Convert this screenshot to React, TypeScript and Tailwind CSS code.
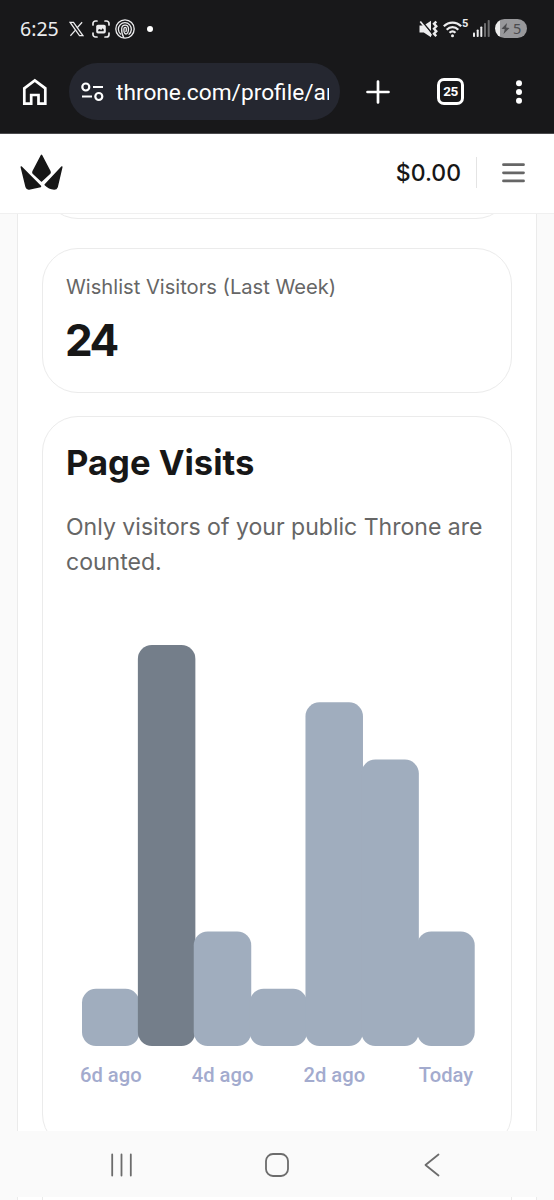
import type { ReactNode } from 'react';

interface Visit { label: string; count: number; active?: boolean; }

const visits: Visit[] = [
  { label: '6d ago', count: 1 },
  { label: '', count: 7, active: true },
  { label: '4d ago', count: 2 },
  { label: '', count: 1 },
  { label: '2d ago', count: 6 },
  { label: '', count: 5 },
  { label: 'Today', count: 2 },
];

const UNIT = 57.3;
const STEP = 55.87;
const BAR = 57.5;

function StatusBar() {
  return (
    <div className="flex h-[56px] items-center justify-between pl-5 pr-[27px] pt-px text-[#ececee]">
      <div className="flex items-center">
        <span className="w-[49px] font-['Noto_Sans'] text-[19.500px] leading-none">6:25</span>
        {/* X */}
        <svg width="15" height="16" viewBox="0 0 16 16" fill="none" stroke="currentColor" strokeWidth="1.3">
          <path d="M1.2 1h3.6l10 14h-3.600z" />
          <path d="M14 .8 8.700 6.700M6.900 9.100 1.500 15.200" />
        </svg>
        {/* Screen capture */}
        <svg className="ml-2" width="18" height="18" viewBox="0 0 18 18" fill="none" stroke="currentColor" strokeWidth="1.7" strokeLinecap="round">
          <path d="M1 5V3.500A2.500 2.500 0 0 1 3.500 1H5M13 1h1.500A2.500 2.500 0 0 1 17 3.500V5M17 13v1.500a2.500 2.500 0 0 1-2.500 2.500H13M5 17H3.500A2.500 2.500 0 0 1 1 14.500V13" />
          <rect x="4.200" y="4.700" width="9.600" height="8.800" rx="1.800" fill="currentColor" stroke="none" />
          <path d="M6.200 11.200v-1.400l1.500-.8 1.500 1 1.500-1.800 1 1.300v1.700z" fill="#18181a" stroke="none" />
        </svg>
        {/* Fingerprint swirl */}
        <svg className="ml-[5px]" width="20" height="20" viewBox="0 0 20 20" fill="none" stroke="currentColor" strokeWidth="1.3" strokeLinecap="round">
          <circle cx="10" cy="10" r="9.200" />
          <path d="M5.500 15A6.500 6.500 0 1 1 14 15.200" />
          <path d="M8.800 18.500C6.800 15.500 6.500 12.500 6.700 9.500c.4-4.500 6.600-4.500 6.800.3.100 3.700-1.300 5.200-2.600 5.200-1.900 0-2.200-3-1.900-5.600.2-1.500 2.200-1.500 2.300.1.100 1.500 0 2.500-.4 3" />
        </svg>
        <span className="ml-[12px] h-[6px] w-[6px] rounded-full bg-white" />
      </div>
      <div className="flex items-center">
        {/* Vibrate */}
        <svg width="19" height="18" viewBox="0 0 19 18" fill="none">
          <path d="M.5 5.500h4.300L12 .8v16.400l-7.200-4.700H.5z" fill="currentColor" />
          <path d="M2.300 .5 14 14.500" stroke="#18181a" strokeWidth="1.500" />
          <path d="M1.300 1.500 12.500 15.500" stroke="currentColor" strokeWidth="1.700" />
          <path d="m17.300 1.500-2.300 2.300 2.300 2.500-2.300 2.500 2.300 2.500-2.300 2.500 2.300 2.300" stroke="currentColor" strokeWidth="2.400" />
        </svg>
        {/* Wifi */}
        <svg className="ml-[5px]" width="19" height="18" viewBox="0 0 19 18" fill="none" stroke="currentColor" strokeWidth="2.200">
          <path d="M.8 6.300c5-5 12.400-5 17.400 0M3.700 9.700c3.400-3.400 8.200-3.400 11.600 0M6.500 12.800c1.800-1.700 4.200-1.700 6 0" />
          <circle cx="9.500" cy="15.700" r="1.500" fill="currentColor" stroke="none" />
        </svg>
        <span className="-mt-2.5 w-[8px] font-['Roboto'] text-[11px] font-bold leading-none">5</span>
        <svg className="ml-[3px]" width="17" height="17" viewBox="0 0 17 17" fill="currentColor">
          <rect x="0" y="12.500" width="2" height="4.500" rx=".8" />
          <rect x="3.700" y="9.500" width="2" height="7.500" rx=".8" />
          <rect x="7.300" y="6.500" width="2" height="10.500" rx=".8" />
          <rect x="11" y="3" width="2" height="14" rx=".8" opacity=".4" />
          <rect x="14.700" y="0" width="2" height="17" rx=".8" opacity=".4" />
        </svg>
        {/* Battery */}
        <div className="ml-[5px] flex h-[19px] w-[32px] items-center overflow-hidden rounded-full bg-[linear-gradient(90deg,#ededed_16%,#98989b_16%)] pl-[6px] text-[#4b4b4e]">
          <svg width="9" height="11" viewBox="0 0 9 11" fill="currentColor">
            <path d="M6 0 .5 5.800l3.300.5L2.500 11 8.500 5l-3.400-.5z" />
          </svg>
          <span className="ml-[3px] font-['Noto_Sans'] text-[14.500px] leading-none">5</span>
        </div>
      </div>
    </div>
  );
}

function BrowserBar() {
  return (
    <div className="flex h-[78px] items-start border-b border-[#4a4a4d] pt-[7px]">
      <div className="flex h-[57px] w-full items-center text-white">
        <svg className="ml-[22px]" width="26" height="28" viewBox="0 0 26 28" fill="none" stroke="currentColor" strokeWidth="2.700">
          <path d="M2.300 10.300 12.800 2.500l10.500 7.800v15.400H16.500V17H9.200v8.700H2.300z" />
        </svg>
        <div className="ml-[21px] flex h-[57px] w-[271px] items-center rounded-full bg-[#252730] pl-[12px] pr-[11px]">
          <svg className="shrink-0" width="23" height="20" viewBox="0 0 23 20" fill="none" stroke="currentColor" strokeWidth="2.200">
            <circle cx="4.800" cy="5" r="3.500" />
            <path d="M12 5h10M1 14.500h10" />
            <circle cx="17.800" cy="14.500" r="3.500" />
          </svg>
          <span className="ml-[12px] mt-0.5 w-[213px] overflow-hidden whitespace-nowrap font-['Roboto'] text-[22.700px] leading-8">throne.com/profile/am</span>
        </div>
        <svg className="ml-[26px]" width="24" height="24" viewBox="0 0 24 24" fill="none" stroke="currentColor" strokeWidth="2.700" strokeLinecap="round">
          <path d="M12 1.500v21M1.500 12h21" />
        </svg>
        {/* Open tabs */}
        <div className="ml-[47px] flex h-[27px] w-[27px] items-center justify-center rounded-[7px] border-3 border-white font-['Roboto'] text-[13.500px] font-bold leading-none tracking-[-0.6px]">25</div>
        <svg className="ml-[52px]" width="6" height="24" viewBox="0 0 6 24" fill="currentColor">
          <circle cx="3" cy="3.200" r="3" />
          <circle cx="3" cy="12" r="3" />
          <circle cx="3" cy="20.800" r="3" />
        </svg>
      </div>
    </div>
  );
}

function SiteHeader() {
  return (
    <header className="flex h-[80px] items-center border-b border-[#f0f0f0] bg-white pb-0.5 pl-5 text-[#171717]">
      <svg className="-mt-px" width="43" height="36" viewBox="0 0 43 36" fill="currentColor" stroke="currentColor" strokeWidth="1.500" strokeLinejoin="round">
        <path d="M21.500 1.300 30 17.700q.4 1-.4 1.800L21.500 27l-8.100-7.500q-.8-.8-.4-1.800z" />
        <path d="M1.300 13 20.500 32.400 9 34.900q-2.100.2-2.800-1.900z" />
        <path d="M41.800 13 25.200 30.800q3.800 3.900 9 4.200 2.200 0 2.900-2z" />
      </svg>
      <span className="ml-auto mt-0.5 text-[23px] font-medium">$0.00</span>
      <span className="ml-[15px] h-[31px] w-px bg-[#e4e4e4]" />
      <svg className="ml-[25px] mr-[29px]" width="23" height="20" viewBox="0 0 23 20" fill="none" stroke="#666" strokeWidth="2.800" strokeLinecap="round">
        <path d="M1.500 1.700h20M1.500 9.800h20M1.500 17.900h20" />
      </svg>
    </header>
  );
}

function Card({ className, children }: { className: string; children?: ReactNode }) {
  return <div className={`shrink-0 rounded-[36px] border border-[#ebebeb] bg-white px-[23px] ${className}`}>{children}</div>;
}

function VisitsChart() {
  const height = 7 * UNIT;
  return (
    <svg className="mt-[65px] font-['Roboto']" width="422" height="450" viewBox="0 0 422 450">
      {visits.map((v, i) => (
        <g key={i}>
          <rect x={16 + i * STEP} y={height - v.count * UNIT} width={BAR} height={v.count * UNIT} rx="14"
            fill={v.active ? '#747e8a' : '#a0adbe'} />
          <text x={44.800 + i * STEP} y="436.500" textAnchor="middle" fontSize="20.200" fontWeight="500" fill="#a3abce">{v.label}</text>
        </g>
      ))}
    </svg>
  );
}

function NavBar() {
  return (
    <nav className="flex h-[66px] shrink-0 items-center justify-between bg-[#fafafa] pl-[110px] pr-[114px] text-[#6c6c6c]">
      <svg className="mt-0.5" width="23" height="24" viewBox="0 0 23 24" fill="none" stroke="currentColor" strokeWidth="1.800" strokeLinecap="round">
        <path d="M2.200 1.500v21M11.500 1.500v21M20.800 1.500v21" />
      </svg>
      <svg className="mr-[4px] mt-0.5" width="24" height="24" viewBox="0 0 24 24" fill="none" stroke="currentColor" strokeWidth="1.800">
        <rect x="1" y="1" width="22" height="22" rx="7" />
      </svg>
      <svg className="mt-0.5" width="16" height="24" viewBox="0 0 16 24" fill="none" stroke="currentColor" strokeWidth="1.800" strokeLinecap="round" strokeLinejoin="round">
        <path d="M14.500 1.500 1.500 12l13 10.500" />
      </svg>
    </nav>
  );
}

export default function App() {
  return (
    <div className="flex h-[1200px] w-[554px] flex-col overflow-hidden bg-[#fafafa] font-['Inter',sans-serif]">
      <div className="shrink-0 bg-[#18181a]">
        <StatusBar />
        <BrowserBar />
      </div>
      <div className="shrink-0"><SiteHeader /></div>

      <main className="mx-[17px] flex h-[917px] shrink-0 flex-col overflow-hidden border-x border-[#ebebeb] bg-white px-[24px]">
        <Card className="-mt-[76px] h-[81px]" />
        <Card className="mt-[29px] h-[145px] pt-[23px]">
          <p className="text-[20.150px] leading-[30px] text-[#666]">Wishlist Visitors (Last Week)</p>
          <p className="-ml-px mt-[11px] text-[44px] font-bold leading-[54px] tracking-[-2.500px] text-[#171717]">24</p>
        </Card>
        <Card className="mt-[23px] h-[734px] pt-[22px]">
          <h2 className="text-[34.600px] font-bold leading-[46px] text-[#171717]">Page Visits</h2>
          <p className="mt-[25px] text-[23.050px] leading-[35px] text-[#666]">
            Only visitors of your public Throne are counted.
          </p>
          <VisitsChart />
        </Card>
      </main>

      <NavBar />
      {/* Sliver of page below the gesture bar */}
      <div className="mx-[17px] flex grow border-x border-[#ebebeb] bg-white px-[24px]">
        <div className="grow border-x border-[#ebebeb]" />
      </div>
    </div>
  );
}
